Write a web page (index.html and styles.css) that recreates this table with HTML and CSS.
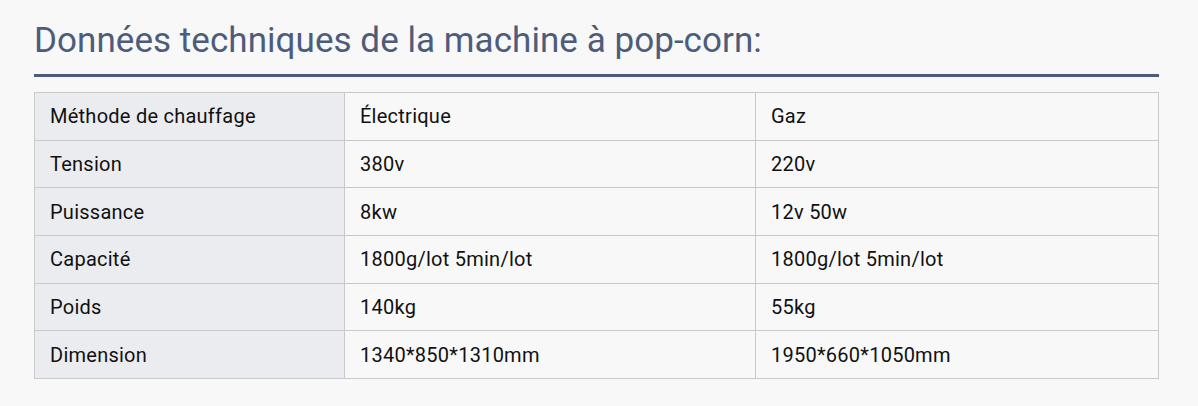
FILE: index.html
```html
<!DOCTYPE html>
<html lang="fr">
<head>
<meta charset="utf-8">
<link rel="stylesheet" href="styles.css">
</head>
<body>
<div class="wrap">
  <h2 class="title">Données techniques de la machine à pop-corn:</h2>
  <table class="spec">
    <tr><th>Méthode de chauffage</th><td>Électrique</td><td>Gaz</td></tr>
    <tr><th>Tension</th><td>380v</td><td>220v</td></tr>
    <tr><th>Puissance</th><td>8kw</td><td>12v 50w</td></tr>
    <tr><th>Capacité</th><td>1800g/lot 5min/lot</td><td>1800g/lot 5min/lot</td></tr>
    <tr><th>Poids</th><td>140kg</td><td>55kg</td></tr>
    <tr><th>Dimension</th><td>1340*850*1310mm</td><td>1950*660*1050mm</td></tr>
  </table>
</div>
</body>
</html>
```
FILE: styles.css
```css
html, body { margin: 0; padding: 0; background: #f8f8f8; }
body { font-family: Roboto, "Liberation Sans", sans-serif; }
.wrap { padding: 17px 39px 0 34px; }
.title {
  margin: 0 0 15px;
  font-weight: 400;
  font-size: 35px;
  line-height: 48px;
  letter-spacing: 0.05px;
  color: #4c5d7c;
  padding-bottom: 9px;
  border-bottom: 3px solid #4c5d7c;
}
.spec { width: 100%; border-collapse: collapse; font-size: 20px; letter-spacing: 0.25px; color: #111; }
.spec th, .spec td {
  border: 1px solid #c9c9c9;
  height: 47.67px;
  padding: 0 15px;
  text-align: left;
  font-weight: 400;
  box-sizing: border-box;
}
.spec th { background: #ebecf0; width: 310px; }
.spec td:nth-child(2) { width: 411px; }
```
